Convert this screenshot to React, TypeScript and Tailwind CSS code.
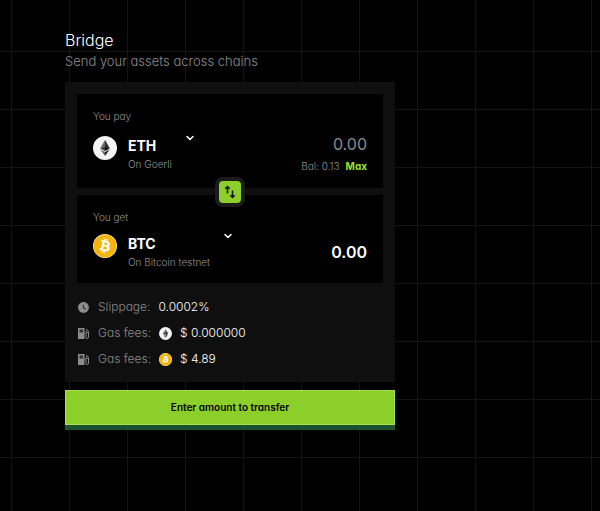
import React, { useState } from 'react';
import { ChevronDown } from 'lucide-react';
import { FaBitcoin } from 'react-icons/fa';
import { MdWatchLater } from 'react-icons/md';

type Token = 'ETH' | 'BTC';

const EthIcon = ({ className }: { className: string }) => (
  <svg viewBox="0 0 24 24" className={className} aria-hidden="true">
    <circle cx="12" cy="12" r="12" fill="#f4f4f4" />
    <path d="M12 4 7.2 12.2 12 10.1z" fill="#6b6b6b" />
    <path d="M12 4v6.1l4.8 2.1z" fill="#2c2c2c" />
    <path d="M7.2 12.2 12 15V10.1z" fill="#3c3c3c" />
    <path d="M16.8 12.2 12 15V10.1z" fill="#0c0c0c" />
    <path d="M7.2 13.3 12 20v-3.9z" fill="#6b6b6b" />
    <path d="M16.8 13.3 12 20v-3.9z" fill="#222222" />
  </svg>
);

const BtcIcon = ({ className }: { className: string }) => (
  <span className={`rounded-full bg-white ${className}`}>
    <FaBitcoin className="h-full w-full text-[#f5b50f]" aria-hidden="true" />
  </span>
);

const GasIcon = () => (
  <svg viewBox="0 0 13 13" className="h-[13px] w-[13px] shrink-0" fill="none" aria-hidden="true">
    <path d="M1 1h6.5v11H1z" fill="#8c8c8c" />
    <path d="M2.5 2.5h3.5v3H2.5z" fill="#303030" />
    <path d="M7.5 6.5H9v3.7c0 1.8 2.5 1.8 2.5 0V4.3L9 1.8M9.3 3.5v2h2.2" stroke="#8c8c8c" />
  </svg>
);

interface TokenPickerProps {
  id: string;
  token: Token;
  network: string;
  onChange: (token: Token) => void;
}

const TokenPicker = ({ id, token, network, onChange }: TokenPickerProps) => (
  <div className="flex items-start">
    {token === 'ETH' ? (
      <EthIcon className="h-6 w-6 shrink-0" />
    ) : (
      <BtcIcon className="h-6 w-6 shrink-0" />
    )}
    <div className="ml-[11px] flex flex-col">
      <select
        id={id}
        value={token}
        onChange={(e) => onChange(e.target.value as Token)}
        className="h-5 appearance-none bg-black text-sm leading-5 font-bold text-white outline-none"
      >
        <option value="ETH">ETH</option>
        <option value="BTC">BTC</option>
      </select>
      <span className="text-[10px] leading-4 font-light text-[#939393]">{network}</span>
    </div>
    <ChevronDown className="-mt-1 ml-3 h-3 w-3 text-white" strokeWidth={3} />
  </div>
);

const App = () => {
  const [payToken, setPayToken] = useState<Token>('ETH');
  const [getToken, setGetToken] = useState<Token>('BTC');
  const [amount, setAmount] = useState('');

  const networks = { ETH: 'On Goerli', BTC: 'On Bitcoin testnet' };

  const swap = () => {
    setPayToken(getToken);
    setGetToken(payToken);
  };

  return (
    <div className="min-h-screen bg-black bg-[linear-gradient(to_right,#141414_1px,transparent_1px),linear-gradient(to_bottom,#141414_1px,transparent_1px)] bg-[size:58px_58px] bg-[position:11px_51px] px-[65px] pt-7 pb-10 font-['Inter',sans-serif] [font-feature-settings:'cv11']">
      <main className="w-full max-w-[330px]">
        <h1 className="text-base leading-6 font-light text-white">Bridge</h1>
        <p className="text-[13px] leading-[18px] font-light text-[#8c8c8c]">
          Send your assets across chains
        </p>

        <div className="mt-3 bg-[#0f0f0f] px-3 pt-3 pb-[13px]">
          {/* Pay */}
          <section className="bg-black px-4 pt-3.5 pb-3">
            <label htmlFor="pay-token" className="block text-[10px] leading-4 font-light text-[#939393]">
              You pay
            </label>
            <div className="mt-2 flex items-center justify-between">
              <TokenPicker
                id="pay-token"
                token={payToken}
                network={networks[payToken]}
                onChange={setPayToken}
              />
              <div className="flex flex-col items-end">
                <input
                  aria-label="Amount to pay"
                  inputMode="decimal"
                  placeholder="0.00"
                  value={amount}
                  onChange={(e) => setAmount(e.target.value)}
                  className="h-6 w-24 bg-transparent text-right text-base text-white outline-none placeholder:text-[#8c8c8c]"
                />
                <div className="flex items-center gap-1.5 text-[10px] leading-5">
                  <span className="font-light text-[#939393]">Bal: 0.13</span>
                  <button
                    type="button"
                    onClick={() => setAmount('0.13')}
                    className="font-bold text-[#9be22d]"
                  >
                    Max
                  </button>
                </div>
              </div>
            </div>
          </section>

          {/* Swap button sits over the gap between the two panels */}
          <div className="relative flex h-[7px] items-center justify-center">
            <button
              type="button"
              aria-label="Swap tokens"
              onClick={swap}
              className="absolute flex h-[30px] w-[30px] items-center justify-center rounded-lg border-4 border-[#1c1c1c] bg-[#8ccf2b]"
            >
              <svg viewBox="0 0 14 14" className="h-3.5 w-3.5 shrink-0" fill="none" stroke="#111" strokeWidth="1.5">
                <path d="M4.5 8.5V1.5M2.3 3.7 4.5 1.5l2.2 2.2M9.5 5.5v7M7.3 10.3 9.5 12.5l2.2-2.2" />
              </svg>
            </button>
          </div>

          {/* Get */}
          <section className="bg-black px-4 pt-3.5 pb-3">
            <label htmlFor="get-token" className="block text-[10px] leading-4 font-light text-[#939393]">
              You get
            </label>
            <div className="mt-2 flex min-h-[38px] items-center justify-between">
              <TokenPicker
                id="get-token"
                token={getToken}
                network={networks[getToken]}
                onChange={setGetToken}
              />
              <span className="text-base font-semibold text-white">0.00</span>
            </div>
          </section>

          {/* Fees */}
          <div className="mt-3.5 flex flex-col gap-1.5 text-xs leading-5 font-light text-white">
            <div className="flex items-center gap-2">
              <MdWatchLater className="h-[13px] w-[13px] shrink-0 text-[#8c8c8c]" />
              <span className="text-[#8c8c8c]">Slippage:</span>
              <span>0.0002%</span>
            </div>
            <div className="flex items-center gap-2">
              <GasIcon />
              <span className="text-[#8c8c8c]">Gas fees:</span>
              <EthIcon className="h-[13px] w-[13px]" />
              <span>$ 0.000000</span>
            </div>
            <div className="flex items-center gap-2">
              <GasIcon />
              <span className="text-[#8c8c8c]">Gas fees:</span>
              <BtcIcon className="h-[13px] w-[13px]" />
              <span>$ 4.89</span>
            </div>
          </div>
        </div>

        <button
          type="button"
          className="mt-2 block h-[35px] w-full border border-[#a5e04f] bg-[#8ccf2b] text-[10px] font-semibold text-black shadow-[0_5px_0_#1b5230]"
        >
          Enter amount to transfer
        </button>
      </main>
    </div>
  );
};

export default App;
